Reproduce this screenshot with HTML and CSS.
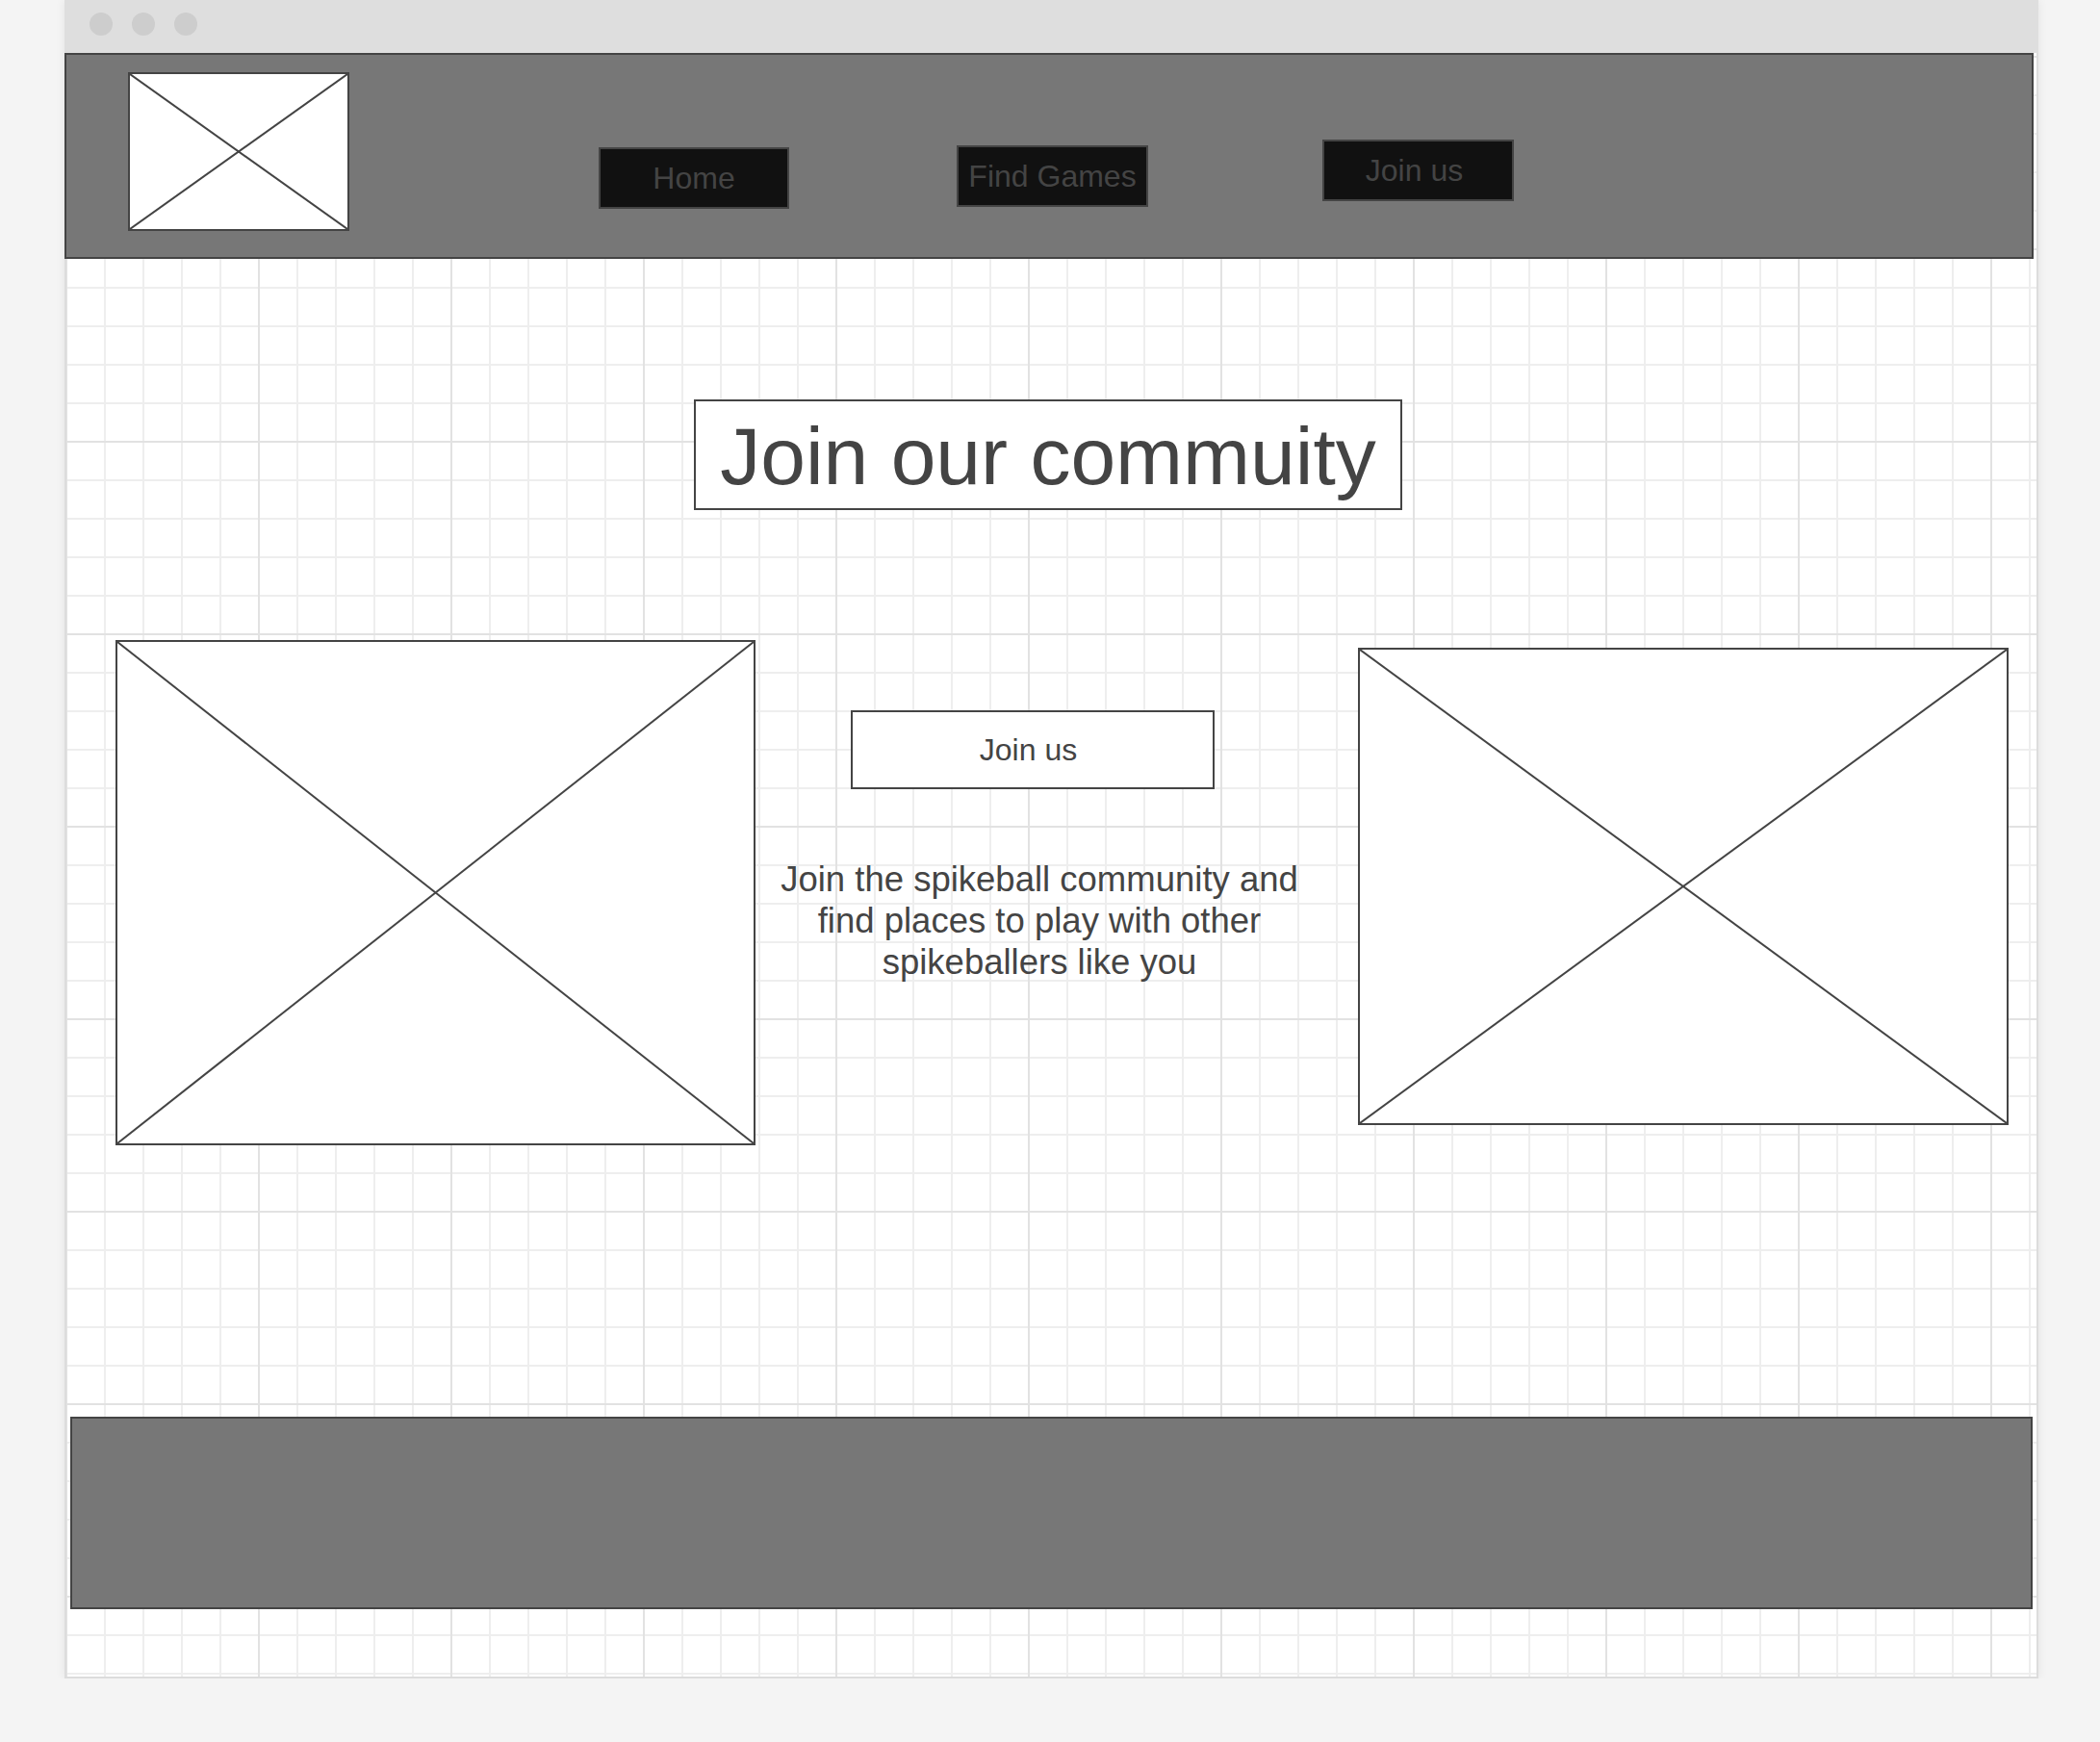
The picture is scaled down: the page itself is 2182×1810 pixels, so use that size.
FILE: index.html
```html
<!DOCTYPE html>
<html lang="en">
<head>
<meta charset="utf-8">
<title>Spikeball wireframe</title>
<link rel="stylesheet" href="styles.css">
</head>
<body>
<div class="window">
  <div class="titlebar">
    <span class="dot"></span><span class="dot"></span><span class="dot"></span>
  </div>
  <div class="canvas">
    <header class="header">
      <div class="ph logo">
        <svg viewBox="0 0 100 100" preserveAspectRatio="none"><line x1="0" y1="0" x2="100" y2="100"/><line x1="100" y1="0" x2="0" y2="100"/></svg>
      </div>
      <nav class="nav">
        <a class="nav-btn nav-home">Home</a>
        <a class="nav-btn nav-games">Find Games</a>
        <a class="nav-btn nav-join">Join us</a>
      </nav>
    </header>
    <main class="main">
      <h1 class="title">Join our commuity</h1>
      <section class="row">
        <div class="ph img-left">
          <svg viewBox="0 0 100 100" preserveAspectRatio="none"><line x1="0" y1="0" x2="100" y2="100"/><line x1="100" y1="0" x2="0" y2="100"/></svg>
        </div>
        <div class="middle">
          <button class="cta">Join us</button>
          <p class="blurb">Join the spikeball community and<br>find places to play with other<br>spikeballers like you</p>
        </div>
        <div class="ph img-right">
          <svg viewBox="0 0 100 100" preserveAspectRatio="none"><line x1="0" y1="0" x2="100" y2="100"/><line x1="100" y1="0" x2="0" y2="100"/></svg>
        </div>
      </section>
    </main>
    <footer class="footer"></footer>
  </div>
</div>
</body>
</html>
```
FILE: styles.css
```css
* { box-sizing: border-box; }

html, body {
  margin: 0;
  padding: 0;
  background: #f4f4f4;
  font-family: "Liberation Sans", Arial, sans-serif;
  color: #444;
}

.window {
  margin-left: 67px;
  width: 2051px;
  height: 1744px;
  box-shadow: 0 0 10px rgba(0, 0, 0, 0.07);
}

.titlebar {
  height: 55px;
  background: #dedede;
  display: flex;
  align-items: center;
  gap: 20px;
  padding: 0 0 5px 26px;
}

.dot {
  width: 24px;
  height: 24px;
  border-radius: 50%;
  background: #cdcdcd;
}

.canvas {
  height: 1689px;
  border: 2px solid #dcdcdc;
  border-top: none;
  background-color: #fff;
  background-image:
    linear-gradient(to right, #e2e2e2 2px, transparent 2px),
    linear-gradient(to bottom, #e2e2e2 2px, transparent 2px),
    linear-gradient(to right, #eeeeee 2px, transparent 2px),
    linear-gradient(to bottom, #eeeeee 2px, transparent 2px);
  background-size: 200px 200px, 200px 200px, 40px 40px, 40px 40px;
  background-position: -1px 3px, -1px 3px, -1px 3px, -1px 3px;
}

/* placeholders */
.ph {
  border: 2px solid #444;
  background: #fff;
  flex: none;
}
.ph svg {
  display: block;
  width: 100%;
  height: 100%;
}
.ph line {
  stroke: #444;
  stroke-width: 2;
  vector-effect: non-scaling-stroke;
}

/* header */
.header {
  margin-left: -2px;
  width: 2046px;
  height: 214px;
  background: #777;
  border: 2px solid #444;
  display: flex;
  align-items: flex-start;
  padding: 18px 0 0 64px;
}

.logo {
  width: 230px;
  height: 165px;
}

.nav {
  display: flex;
  align-items: flex-start;
}

.nav-btn {
  width: 198px;
  height: 64px;
  background: #111;
  border: 2px solid #444;
  color: #444;
  font-size: 32px;
  display: flex;
  align-items: center;
  justify-content: center;
  text-decoration: none;
}

.nav-home { margin: 78px 0 0 259px; }
.nav-games { margin: 76px 0 0 174px; width: 199px; }
.nav-join { margin: 70px 0 0 181px; width: 199px; padding-right: 8px; }

/* main */
.main {
  display: flex;
  flex-direction: column;
}

.title {
  margin: 146px 0 0 652px;
  width: 736px;
  height: 115px;
  border: 2px solid #444;
  background: #fff;
  font-size: 84px;
  font-weight: normal;
  line-height: 84px;
  padding-top: 15px;
  text-align: center;
  color: #444;
}

.row {
  margin-top: 135px;
  display: flex;
  align-items: flex-start;
}

.img-left {
  margin-left: 51px;
  width: 665px;
  height: 525px;
}

.middle {
  width: 580px;
  margin-left: 5px;
  display: flex;
  flex-direction: column;
  align-items: flex-start;
}

.cta {
  margin: 73px 0 0 94px;
  width: 378px;
  height: 82px;
  border: 2px solid #444;
  background: #fff;
  color: #444;
  font-family: "Liberation Sans", Arial, sans-serif;
  font-size: 32px;
  padding: 0 9px 0 0;
  display: flex;
  align-items: center;
  justify-content: center;
}

.blurb {
  margin: 72px 0 0 0;
  width: 100%;
  font-size: 36.5px;
  line-height: 43px;
  text-align: center;
  color: #444;
}

.img-right {
  margin: 8px 0 0 41px;
  width: 676px;
  height: 496px;
}

/* footer */
.footer {
  margin: 282px 0 0 4px;
  width: 2039px;
  height: 200px;
  background: #777;
  border: 2px solid #444;
}
```
